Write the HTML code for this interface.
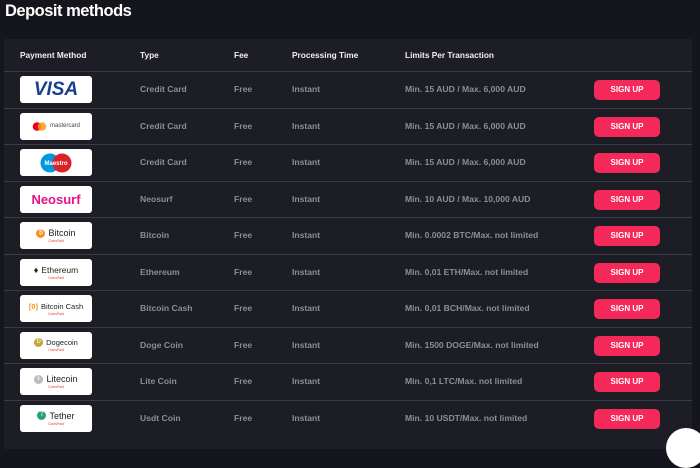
<!DOCTYPE html>
<html><head><meta charset="utf-8"><style>
*{margin:0;padding:0;box-sizing:border-box}
body{width:700px;height:439px;overflow:hidden;background:#15161d;font-family:"Liberation Sans",sans-serif;position:relative}
h1{position:absolute;left:5px;top:2px;font-size:16.5px;letter-spacing:-0.5px;font-weight:bold;color:#fff}
.tbl{position:absolute;left:4px;top:39px;width:688px;height:410px;background:#1c1d25}
.hd{position:absolute;top:11px;font-size:8.3px;font-weight:bold;color:#f0f0f0}
.row{position:absolute;left:0;width:688px;height:36.5px;border-top:1px solid #3a3b44}
.c{position:absolute;top:0;line-height:35px;font-size:8.6px;color:#8d8e95;font-weight:bold}
.logo{position:absolute;left:16px;top:4px;width:72px;height:27px;background:#fff;border-radius:3px;display:flex;align-items:center;justify-content:center;flex-direction:column;color:#222}
.btn{position:absolute;left:590px;top:8px;width:66px;height:20px;background:#f5285a;border-radius:5px;color:#fff;font-size:8px;font-weight:bold;text-align:center;line-height:20px}
.sub{font-size:3.5px;color:#e33;margin-top:1px}
.cn{display:flex;align-items:center;font-size:9px;gap:3px}
.dot{width:9px;height:9px;border-radius:50%;display:inline-block;color:#fff;font-size:6px;text-align:center;line-height:9px}
</style></head><body>
<h1>Deposit methods</h1>
<div class="tbl">
<div class="hd" style="left:16px">Payment Method</div>
<div class="hd" style="left:136px">Type</div>
<div class="hd" style="left:230px">Fee</div>
<div class="hd" style="left:288px">Processing Time</div>
<div class="hd" style="left:401px">Limits Per Transaction</div>

<div class="row" style="top:32px"><div class="logo"><span style="font-size:19px;font-weight:bold;font-style:italic;color:#1a3f8f">VISA</span></div><div class="c" style="left:136px">Credit Card</div><div class="c" style="left:230px">Free</div><div class="c" style="left:288px">Instant</div><div class="c" style="left:401px">Min. 15 AUD / Max. 6,000 AUD</div><div class="btn">SIGN UP</div></div>

<div class="row" style="top:68.5px"><div class="logo"><div class="cn" style="font-size:6px;color:#444"><svg width="15" height="9"><circle cx="5" cy="4.5" r="4.3" fill="#eb001b"/><circle cx="10" cy="4.5" r="4.3" fill="#f79e1b" opacity=".85"/></svg>mastercard</div></div><div class="c" style="left:136px">Credit Card</div><div class="c" style="left:230px">Free</div><div class="c" style="left:288px">Instant</div><div class="c" style="left:401px">Min. 15 AUD / Max. 6,000 AUD</div><div class="btn">SIGN UP</div></div>

<div class="row" style="top:105px"><div class="logo"><svg width="34" height="20"><circle cx="11" cy="10" r="9.5" fill="#0099df"/><circle cx="23" cy="10" r="9.5" fill="#d9222a"/><text x="17" y="12" font-size="6" fill="#fff" text-anchor="middle" font-family="Liberation Sans" font-weight="bold">Maestro</text></svg></div><div class="c" style="left:136px">Credit Card</div><div class="c" style="left:230px">Free</div><div class="c" style="left:288px">Instant</div><div class="c" style="left:401px">Min. 15 AUD / Max. 6,000 AUD</div><div class="btn">SIGN UP</div></div>

<div class="row" style="top:141.5px"><div class="logo"><span style="font-size:13px;font-weight:bold;color:#e5128a">Neosurf</span></div><div class="c" style="left:136px">Neosurf</div><div class="c" style="left:230px">Free</div><div class="c" style="left:288px">Instant</div><div class="c" style="left:401px">Min. 10 AUD / Max. 10,000 AUD</div><div class="btn">SIGN UP</div></div>

<div class="row" style="top:178px"><div class="logo"><div class="cn"><span class="dot" style="background:#f7931a">₿</span>Bitcoin</div><div class="sub">CoinsPaid</div></div><div class="c" style="left:136px">Bitcoin</div><div class="c" style="left:230px">Free</div><div class="c" style="left:288px">Instant</div><div class="c" style="left:401px">Min. 0.0002 BTC/Max. not limited</div><div class="btn">SIGN UP</div></div>

<div class="row" style="top:214.5px"><div class="logo"><div class="cn" style="font-size:8.5px"><span style="font-size:9px">♦</span>Ethereum</div><div class="sub">CoinsPaid</div></div><div class="c" style="left:136px">Ethereum</div><div class="c" style="left:230px">Free</div><div class="c" style="left:288px">Instant</div><div class="c" style="left:401px">Min. 0,01 ETH/Max. not limited</div><div class="btn">SIGN UP</div></div>

<div class="row" style="top:251px"><div class="logo"><div class="cn" style="font-size:7.5px"><span style="color:#f7931a;font-weight:bold">[0]</span>Bitcoin Cash</div><div class="sub">CoinsPaid</div></div><div class="c" style="left:136px">Bitcoin Cash</div><div class="c" style="left:230px">Free</div><div class="c" style="left:288px">Instant</div><div class="c" style="left:401px">Min. 0,01 BCH/Max. not limited</div><div class="btn">SIGN UP</div></div>

<div class="row" style="top:287.5px"><div class="logo"><div class="cn" style="font-size:7.5px"><span class="dot" style="background:#c2a633">Ð</span>Dogecoin</div><div class="sub">CoinsPaid</div></div><div class="c" style="left:136px">Doge Coin</div><div class="c" style="left:230px">Free</div><div class="c" style="left:288px">Instant</div><div class="c" style="left:401px">Min. 1500 DOGE/Max. not limited</div><div class="btn">SIGN UP</div></div>

<div class="row" style="top:324px"><div class="logo"><div class="cn"><span class="dot" style="background:#bbb">Ł</span>Litecoin</div><div class="sub">CoinsPaid</div></div><div class="c" style="left:136px">Lite Coin</div><div class="c" style="left:230px">Free</div><div class="c" style="left:288px">Instant</div><div class="c" style="left:401px">Min. 0,1 LTC/Max. not limited</div><div class="btn">SIGN UP</div></div>

<div class="row" style="top:360.5px"><div class="logo"><div class="cn"><span class="dot" style="background:#26a17b">T</span>Tether</div><div class="sub">CoinsPaid</div></div><div class="c" style="left:136px">Usdt Coin</div><div class="c" style="left:230px">Free</div><div class="c" style="left:288px">Instant</div><div class="c" style="left:401px">Min. 10 USDT/Max. not limited</div><div class="btn">SIGN UP</div></div>
</div>
<div style="position:absolute;left:666px;top:428px;width:40px;height:40px;border-radius:50%;background:#fff"></div>
</body></html>
